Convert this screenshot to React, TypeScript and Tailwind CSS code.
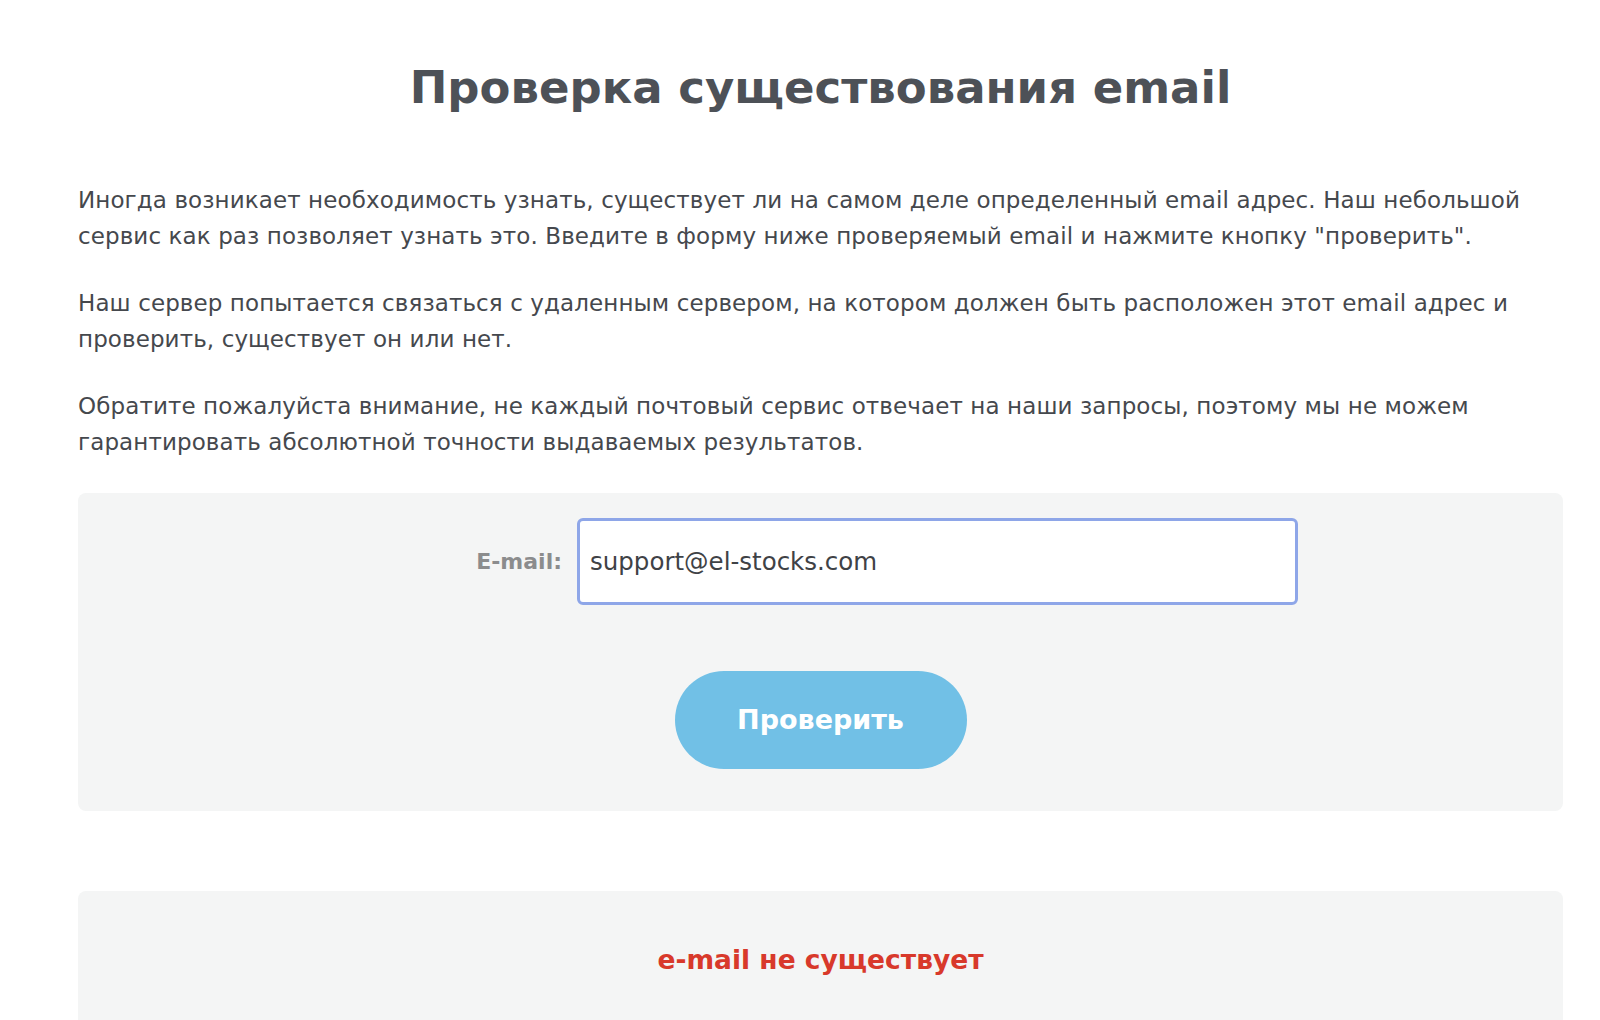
import React from 'react';

const App = () => {
  const paragraphs = [
    'Иногда возникает необходимость узнать, существует ли на самом деле определенный email адрес. Наш небольшой сервис как раз позволяет узнать это. Введите в форму ниже проверяемый email и нажмите кнопку "проверить".',
    'Наш сервер попытается связаться с удаленным сервером, на котором должен быть расположен этот email адрес и проверить, существует он или нет.',
    'Обратите пожалуйста внимание, не каждый почтовый сервис отвечает на наши запросы, поэтому мы не можем гарантировать абсолютной точности выдаваемых результатов.',
  ];

  return (
    <div className="min-h-[1020px] bg-white pl-[78px] pr-[37px] font-['DejaVu_Sans',sans-serif] text-[#45484d]">
      {/* Heading */}
      <h1 className="pt-[61px] text-center text-[45px] font-bold leading-[54px] text-[#4d5157]">
        Проверка существования email
      </h1>

      {/* Intro */}
      <div className="mt-[67px] space-y-[31px]">
        {paragraphs.map((text, idx) => (
          <p key={idx} className="text-[23px] leading-[36px] tracking-[0.1px]">
            {text}
          </p>
        ))}
      </div>

      {/* Form */}
      <form className="mt-[33px] rounded-lg bg-[#f4f5f5] pt-[25px] pb-[42px]" onSubmit={(e) => e.preventDefault()}>
        <div className="flex items-center">
          <label className="w-[499px] pr-[15px] text-right text-[22px] font-bold text-[#8b8c8d]">
            E-mail:
          </label>
          <input
            type="text"
            defaultValue="support@el-stocks.com"
            className="h-[87px] w-[721px] rounded-md border-[3px] border-[#8ea6e8] bg-white px-[10px] text-[24.5px] text-[#3f4246] outline-none"
          />
        </div>
        <div className="mt-[66px] flex justify-center">
          <button
            type="submit"
            className="h-[98px] w-[292px] rounded-full bg-[#71c0e6] text-[27px] font-bold text-white"
          >
            Проверить
          </button>
        </div>
      </form>

      {/* Result */}
      <div className="mt-[80px] h-[130px] rounded-t-lg bg-[#f4f5f5] pt-[49px] text-center">
        <span className="text-[26.5px] font-bold text-[#d8392b]">e-mail не существует</span>
      </div>
    </div>
  );
};

export default App;
